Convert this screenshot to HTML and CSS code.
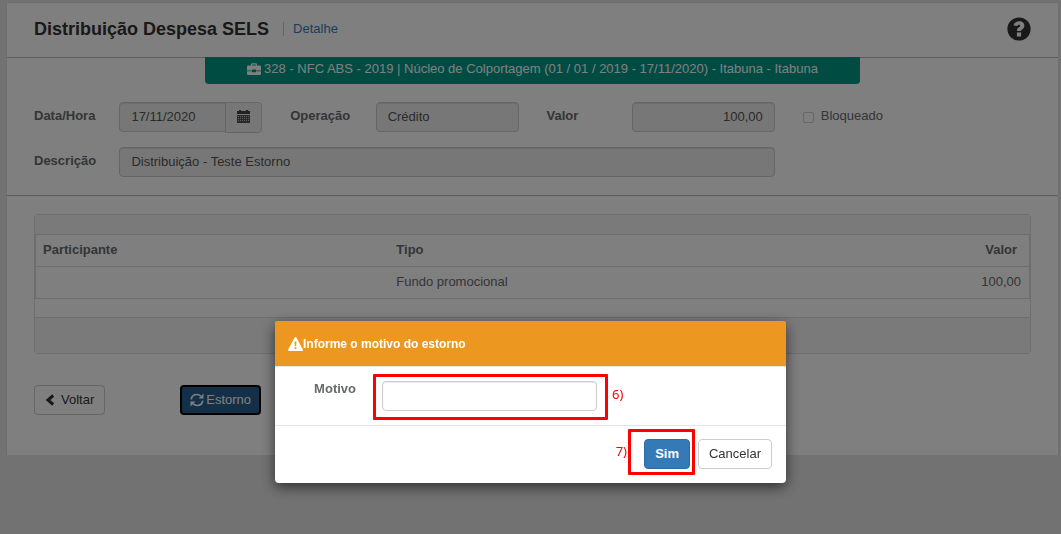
FILE: index.html
```html
<!DOCTYPE html>
<html lang="pt-BR">
<head>
<meta charset="utf-8">
<title>Distribuição Despesa SELS</title>
<link rel="stylesheet" href="styles.css">
</head>
<body>
<main class="card">
  <header class="card-header">
    <h1 class="title">Distribuição Despesa SELS</h1>
    <a class="crumb" href="#">Detalhe</a>
    <button class="help" type="button" aria-label="Ajuda">
      <svg viewBox="0 0 24 24" width="24" height="24"><circle cx="12" cy="12" r="11.6" fill="#333"/><path d="M6.600 8.600C7 5.600 9.200 4.300 12.200 4.300c3 0 5.200 1.700 5.200 4.400 0 2-1.200 3-2.400 3.900-.7.500-.9.700-.9 1.400H9.900c0-2 .7-2.800 2-3.700.9-.6 1.300-.9 1.300-1.600 0-.6-.5-1-1.200-1-.9 0-1.400.4-1.600 1.400z" fill="#fff"/><path d="M9.900 15.400h4.200v4.100H9.900z" fill="#fff"/></svg>
    </button>
  </header>

  <section class="grid">
    <div class="banner">
      <svg viewBox="0 0 14 12" width="14" height="12"><path fill="currentColor" fill-rule="evenodd" d="M4 2.500V1.500Q4 .3 5.200.3h3.600Q10 .3 10 1.500v1h2.800Q14 2.500 14 3.700V7.500H9V6.500H5v1H0V3.700Q0 2.500 1.200 2.500zM5.200 2.500h3.600v-1H5.200zM0 8.200h5v1h4v-1h5v2.600q0 1.200-1.200 1.200H1.200Q0 12 0 10.800z"/></svg>
      <span>328 - NFC ABS - 2019 | Núcleo de Colportagem (01 / 01 / 2019 - 17/11/2020) - Itabuna - Itabuna</span>
    </div>
  </section>

  <form class="grid form">
    <label class="label" for="data">Data/Hora</label>
    <div class="date span-2">
      <input class="input date-input" id="data" type="text" value="17/11/2020" readonly>
      <button class="date-button" type="button" aria-label="Abrir calendário">
        <svg viewBox="0 0 13 13" width="13" height="13"><path fill="#444" d="M0 1h2V0h2v1h5V0h2v1h2v3H0z"/><path fill="#555" d="M0 5h13v8H0z"/><path stroke="#bbb" stroke-dasharray="1 1" d="M1 6.500h11M1 8.500h11M1 10.500h11"/></svg>
      </button>
    </div>
    <label class="label" for="operacao">Operação</label>
    <input class="input span-2" id="operacao" type="text" value="Crédito" readonly>
    <label class="label" for="valor">Valor</label>
    <input class="input span-2 number" id="valor" type="text" value="100,00" readonly>
    <label class="check span-2"><input class="check-box" type="checkbox" disabled>Bloqueado</label>
    <label class="label new-row" for="descricao">Descrição</label>
    <input class="input span-8" id="descricao" type="text" value="Distribuição - Teste Estorno" readonly>
  </form>

  <section class="content">
    <div class="panel">
      <div class="panel-head"></div>
      <table class="table">
        <thead><tr><th class="col-person">Participante</th><th>Tipo</th><th class="th-value">Valor</th></tr></thead>
        <tbody><tr><td></td><td>Fundo promocional</td><td class="number">100,00</td></tr></tbody>
      </table>
      <div class="panel-foot"></div>
    </div>
    <div class="actions">
      <button class="btn" type="button">
        <svg viewBox="0 0 10 13" width="10" height="13"><path d="M8.200 1.500 3 6l5.200 4.500" fill="none" stroke="#333" stroke-width="3"/></svg>
        Voltar
      </button>
      <button class="btn btn-focused" type="button">
        <svg viewBox="0 0 14 14" width="14" height="14"><path d="M1.200 6.300C1.700 3.300 4 1.500 6.800 1.500c1.600 0 3 .6 4 1.700M12.800 7.700c-.5 3-2.800 4.800-5.600 4.800-1.600 0-3-.6-4-1.700" fill="none" stroke="#fff" stroke-width="1.700"/><path d="M13.500.5v5H8.500zM.5 13.500v-5h5z" fill="#fff"/></svg>
        Estorno
      </button>
    </div>
  </section>
</main>

<div class="backdrop">
  <div class="modal" role="dialog" aria-modal="true" aria-labelledby="modal-title">
    <div class="modal-header">
      <svg viewBox="0 0 15 14" width="15" height="14"><path fill="#fff" fill-rule="evenodd" d="M7.500 0Q8.100 0 8.500.700L14.800 12.500Q15.300 14 14 14H1Q-.3 14 .2 12.500L6.500.700Q6.900 0 7.500 0zM6.500 4.500l.4 4.700h1.200l.4-4.700zM6.600 10.300v1.800h1.800v-1.800z"/></svg>
      <h2 class="modal-title" id="modal-title">Informe o motivo do estorno</h2>
    </div>
    <div class="modal-body">
      <label class="label" for="motivo">Motivo</label>
      <div class="marked">
        <input class="input input-edit" id="motivo" type="text">
        <span class="mark mark-field"></span>
        <span class="note note-field">6)</span>
      </div>
    </div>
    <div class="modal-footer">
      <div class="marked">
        <button class="btn btn-primary" type="button">Sim</button>
        <span class="mark mark-button"></span>
        <span class="note note-button">7)</span>
      </div>
      <button class="btn" type="button">Cancelar</button>
    </div>
  </div>
</div>
</body>
</html>
```

FILE: styles.css
```css
* { box-sizing: border-box; }

body {
  margin: 0;
  padding: 3px 3px 0 7px;
  background: #e5e5e5;
  color: #676a6c;
  font: 13px/18px "Liberation Sans", Arial, sans-serif;
}

input, button { font: inherit; }
svg { display: block; flex: none; }

.card {
  background: #fff;
  box-shadow: 0 0 0 1px #dcdcdc;
  padding-bottom: 40px;
}

.card-header {
  display: flex;
  align-items: center;
  height: 55px;
  padding: 0 27px 2px;
  border-bottom: 1px solid #bcbcbc;
}

.title {
  margin: 0;
  color: #333;
  font-size: 18px;
  line-height: 24px;
}

.crumb {
  margin-left: 14px;
  padding-left: 9px;
  border-left: 1px solid #ccc;
  color: #337ab7;
  line-height: 14px;
  text-decoration: none;
}

.help {
  margin-left: auto;
  padding: 0;
  border: 0;
  background: none;
}

.grid {
  display: grid;
  grid-template-columns: repeat(12, minmax(0, 1fr));
  column-gap: 28px;
  padding: 0 27px;
}

.banner {
  grid-column: 3 / span 8;
  display: flex;
  justify-content: center;
  gap: 3px;
  height: 27px;
  margin-top: -1px;
  padding-top: 3px;
  border-radius: 0 0 4px 4px;
  background: #009886;
  color: #fff;
  white-space: nowrap;
}

.banner svg { margin-top: 3px; }

.form {
  row-gap: 14px;
  padding-top: 18px;
  padding-bottom: 18px;
  border-bottom: 1px solid #bcbcbc;
}

.span-2 { grid-column: span 2; }
.span-8 { grid-column: span 8; }
.new-row { grid-column-start: 1; }
.number { text-align: right; }

.label {
  padding-top: 5px;
  font-weight: bold;
}

.input {
  width: 100%;
  min-width: 0;
  height: 30px;
  padding: 0 11px 2px;
  border: 1px solid #ccc;
  border-radius: 4px;
  background: #eee;
  box-shadow: inset 0 1px 1px rgba(0, 0, 0, .08);
  color: #555;
}

.date { display: flex; }
.date-input { border-radius: 4px 0 0 4px; }

.date-button {
  display: flex;
  flex: none;
  align-items: center;
  justify-content: center;
  width: 37px;
  height: 31px;
  margin-left: -1px;
  padding: 0 0 2px;
  border: 1px solid #ccc;
  border-radius: 0 4px 4px 0;
  background: #eee;
}

.check {
  display: flex;
  align-items: flex-start;
  gap: 7px;
  padding-top: 5px;
}

.check-box {
  appearance: none;
  width: 11px;
  height: 11px;
  margin: 5px 0 0;
  border: 1px solid #ccc;
  border-radius: 2px;
}

.content { padding: 18px 27px 0; }

.panel {
  border: 1px solid #ddd;
  border-radius: 4px;
}

.panel-head {
  height: 19px;
  background: #f5f5f5;
}

.table {
  width: 100%;
  margin-bottom: 18px;
  border: 1px solid #ddd;
  border-collapse: collapse;
}

.table th, .table td {
  height: 32px;
  padding: 0 8px 2px;
  border-top: 1px solid #ddd;
  text-align: left;
}

.table .number { text-align: right; }

.table .th-value {
  padding-right: 12px;
  text-align: right;
}

.table .col-person {
  width: 35.5%;
  padding-left: 7px;
}

.panel-foot {
  height: 36px;
  border-top: 1px solid #ddd;
  background: #f5f5f5;
}

.actions {
  display: flex;
  gap: 75px;
  margin-top: 31px;
}

.btn {
  display: inline-flex;
  align-items: center;
  justify-content: center;
  gap: 6px;
  height: 30px;
  padding: 0 10px;
  border: 1px solid #ccc;
  border-radius: 4px;
  background: #fff;
  color: #333;
}

.btn-focused {
  gap: 2px;
  padding: 0 8px;
  border: 2px solid #000;
  background: #286090;
  color: #fff;
}

.btn-primary {
  border-color: #2e6da4;
  background: #337ab7;
  color: #fff;
  font-weight: bold;
}

.backdrop {
  position: fixed;
  inset: 0;
  padding: 321px 16px 0;
  background: rgba(0, 0, 0, .5);
}

.modal {
  max-width: 511px;
  margin: 0 auto;
  border-radius: 4px;
  background: #fff;
  box-shadow: 0 4px 14px rgba(0, 0, 0, .6);
}

.modal-header {
  display: flex;
  align-items: center;
  height: 46px;
  padding: 0 13px;
  border-bottom: 1px solid #e5e5e5;
  border-radius: 2px 2px 0 0;
  background: #ec971f;
  background-clip: padding-box;
}

.modal-title {
  margin: 0;
  color: #fff;
  font-size: 12px;
}

.modal-body {
  display: grid;
  grid-template-columns: 67px 215px;
  column-gap: 26px;
  padding: 14px;
}

.modal-body .label {
  padding-top: 0;
  line-height: 16px;
  text-align: right;
}

.input-edit {
  display: block;
  background: #fff;
}

.marked { position: relative; }

.mark {
  position: absolute;
  border: 3px solid #f00;
  border-radius: 1px;
  pointer-events: none;
}

.mark-field { inset: -7px -11px -9px -9px; }
.mark-button { inset: -10px -5px -6px -16px; }

.note {
  position: absolute;
  color: #f00;
  font: 13px/18px "Noto Sans", sans-serif;
}

.note-field {
  top: 4px;
  left: 230px;
}

.note-button {
  top: 3px;
  right: 63px;
}

.modal-footer {
  display: flex;
  justify-content: flex-end;
  gap: 8px;
  padding: 13px 14px 14px;
  border-top: 1px solid #e5e5e5;
}
```
